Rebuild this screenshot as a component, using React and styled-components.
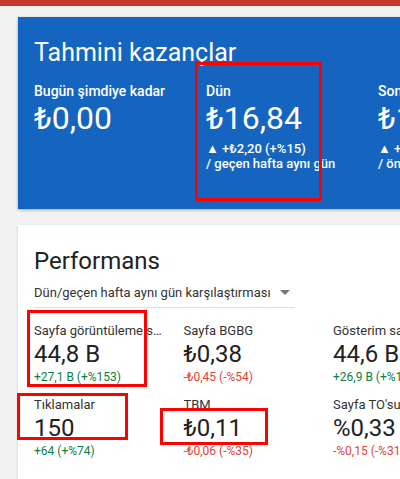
import React from "react";
import styled, { createGlobalStyle } from "styled-components";

const GlobalStyle = createGlobalStyle`
  body {
    margin: 0;
    background: #f2f2f2;
    font-family: Roboto, "Liberation Sans", Arial, sans-serif;
    overflow: hidden;
  }
`;

// Estimated earnings figures
const earnings = [
  { label: "Bugün şimdiye kadar", value: "₺0,00" },
  { label: "Dün", value: "₺16,84", delta: "▲ +₺2,20 (+%15)", compare: "/ geçen hafta aynı gün" },
  { label: "Son 7 gün", value: "₺104,21", delta: "▲ +₺30,12 (+%41)", compare: "/ önceki 7 gün" },
];

// Performance metrics, two rows of three
const metrics = [
  { label: "Sayfa görüntüleme sayısı", value: "44,8 B", delta: "+27,1 B (+%153)", up: true },
  { label: "Sayfa BGBG", value: "₺0,38", delta: "-₺0,45 (-%54)" },
  { label: "Gösterim sayısı", value: "44,6 B", delta: "+26,9 B (+%152)", up: true },
  { label: "Tıklamalar", value: "150", delta: "+64 (+%74)", up: true },
  { label: "TBM", value: "₺0,11", delta: "-₺0,06 (-%35)" },
  { label: "Sayfa TO'su", value: "%0,33", delta: "-%0,15 (-%31)" },
];

// Red annotation frames drawn over the page (relative to the area below the top bar)
const marks = [
  { left: 195, top: 56, width: 127, height: 139 },
  { left: 27, top: 304, width: 120, height: 77 },
  { left: 17, top: 387, width: 111, height: 47 },
  { left: 160, top: 402, width: 108, height: 37 },
];

const App = () => {
  return (
    <>
      <GlobalStyle />
      <TopBar />
      <Page>
        <EarningsCard>
          <CardTitle>Tahmini kazançlar</CardTitle>
          <EarningsRow>
            {earnings.map((e) => (
              <Earning key={e.label}>
                <EarningLabel>{e.label}</EarningLabel>
                <EarningValue>{e.value}</EarningValue>
                {e.delta && (
                  <EarningDelta>
                    {e.delta}
                    <br />
                    {e.compare}
                  </EarningDelta>
                )}
              </Earning>
            ))}
          </EarningsRow>
        </EarningsCard>

        <PerfCard>
          <PerfTitle>Performans</PerfTitle>
          <Compare>
            <span>Dün/geçen hafta aynı gün karşılaştırması</span>
            <Caret />
          </Compare>
          <MetricGrid>
            {metrics.map((m) => (
              <Metric key={m.label}>
                <MetricLabel>{m.label}</MetricLabel>
                <MetricValue>{m.value}</MetricValue>
                <MetricDelta $up={m.up}>{m.delta}</MetricDelta>
              </Metric>
            ))}
          </MetricGrid>
        </PerfCard>

        {marks.map((m, i) => (
          <Mark key={i} style={m} />
        ))}
      </Page>
    </>
  );
};

const TopBar = styled.div`
  height: 6px;
  background: #c5392b;
`;

const Page = styled.div`
  position: relative;
  width: 400px;
  height: 473px;
  overflow: hidden;
  padding: 11px 0 0 18px;
  box-sizing: border-box;
`;

const EarningsCard = styled.section`
  width: 560px;
  height: 192px;
  box-sizing: border-box;
  padding: 20px 16px 0;
  background: #1565c0;
  color: #fff;
  box-shadow: 0 1px 3px rgba(0, 0, 0, 0.3);
`;

const CardTitle = styled.h2`
  margin: 0;
  font-size: 25px;
  font-weight: 400;
  line-height: 32px;
`;

const EarningsRow = styled.div`
  display: flex;
  margin-top: 13px;
`;

const Earning = styled.div`
  flex: 0 0 172px;
`;

const EarningLabel = styled.div`
  font-size: 14px;
  line-height: 18px;
  font-weight: 500;
`;

const EarningValue = styled.div`
  font-size: 32px;
  line-height: 36px;
  margin-top: 0;
`;

const EarningDelta = styled.div`
  margin-top: 5px;
  font-size: 13px;
  line-height: 15px;
  font-weight: 500;
`;

const PerfCard = styled.section`
  margin-top: 16px;
  width: 560px;
  height: 280px;
  box-sizing: border-box;
  padding: 20px 16px 0;
  background: #fff;
  box-shadow: 0 1px 3px rgba(0, 0, 0, 0.15);
`;

const PerfTitle = styled.h2`
  margin: 0;
  font-size: 24px;
  font-weight: 400;
  line-height: 32px;
  color: #212121;
`;

const Compare = styled.div`
  display: flex;
  align-items: center;
  gap: 9px;
  width: 261px;
  height: 22px;
  margin-top: 4px;
  padding-bottom: 4px;
  border-bottom: 1px solid #e0e0e0;
  font-size: 13px;
  color: #333;
`;

const Caret = styled.span`
  width: 0;
  height: 0;
  border-left: 5px solid transparent;
  border-right: 5px solid transparent;
  border-top: 5px solid #757575;
  margin-top: 1px;
`;

const MetricGrid = styled.div`
  display: grid;
  grid-template-columns: repeat(3, 149.5px);
  grid-auto-rows: 74px;
  margin-top: 15px;
`;

const Metric = styled.div`
  display: flex;
  flex-direction: column;
`;

const MetricLabel = styled.div`
  max-width: 128px;
  font-size: 13px;
  line-height: 16px;
  color: #333;
  white-space: nowrap;
  overflow: hidden;
  text-overflow: ellipsis;
`;

const MetricValue = styled.div`
  font-size: 24px;
  line-height: 30px;
  color: #222;
`;

const MetricDelta = styled.div`
  font-size: 12px;
  line-height: 16px;
  color: ${(p) => (p.$up ? "#0b8043" : "#db4437")};
`;

const Mark = styled.div`
  position: absolute;
  box-sizing: border-box;
  border: 3px solid #ff0000;
`;

export default App;
